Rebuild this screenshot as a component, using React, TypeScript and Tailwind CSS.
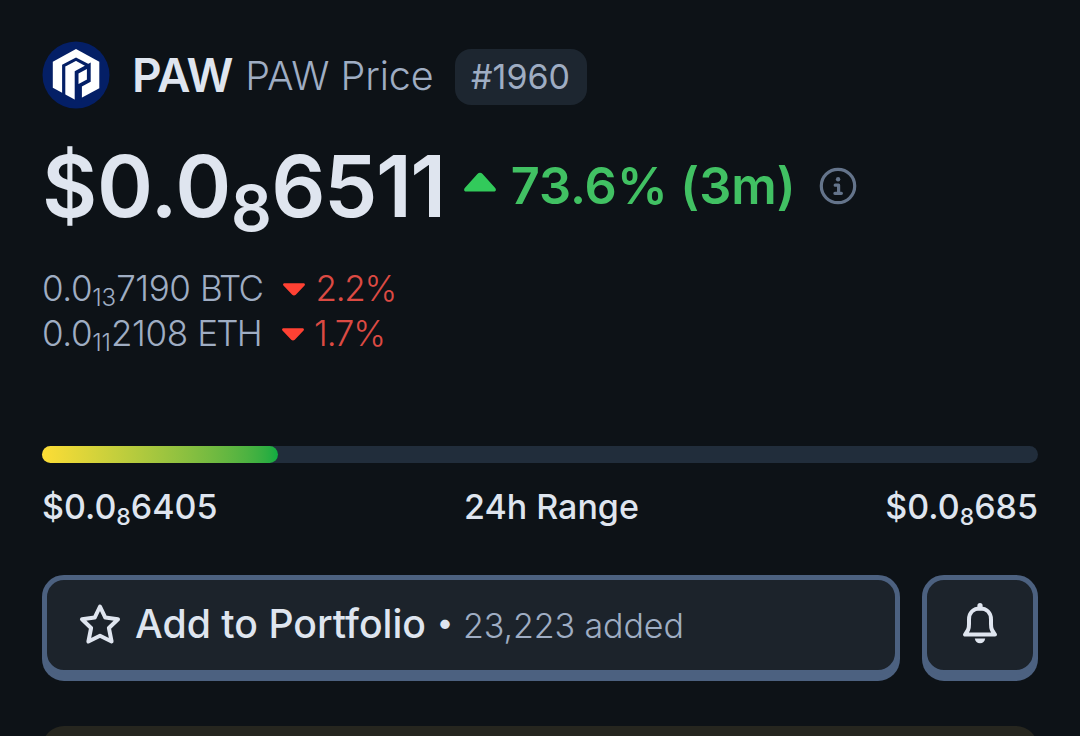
import React from 'react';

// ── Icons ───────────────────────────────────────────────────────────────────
const PawLogo: React.FC = () => (
  <svg viewBox="0 0 68 68" className="w-[68px] h-[68px] shrink-0">
    <circle cx="34" cy="34" r="33.5" fill="#041f66" />
    <path fill="#fff" d="M34 8 L57.3 20.7 V47.2 L34.5 59.6 L10.8 46.8 V20.7 Z" />
    <g fill="none" stroke="#041f66">
      <path strokeWidth="3.2" d="M21.7 55 V24.6 L34 18.2 L46.8 25" />
      <path strokeWidth="3.8" d="M34.6 61 V31.4 L46.8 24.8 V39.6 L38 44.4 V61" />
    </g>
    <path fill="#041f66" d="M33.5 46 H37.5 V61 H33.5 Z" />
  </svg>
);

const Caret: React.FC<{ className: string }> = ({ className }) => (
  <svg viewBox="0 0 32 20" preserveAspectRatio="none" className={className}>
    <path
      fill="currentColor"
      d="M2.2 19.6 H29.8 C32 19.6 32.6 17.2 31 15.7 L18.6 2 C17 0.3 15 0.3 13.4 2 L1 15.7 C-0.6 17.2 0 19.6 2.2 19.6 Z"
    />
  </svg>
);

const InfoIcon: React.FC = () => (
  <svg viewBox="0 0 38 38" className="w-[38px] h-[38px] shrink-0 text-[#64748b]" fill="none" stroke="currentColor">
    <circle cx="19" cy="19" r="16.7" strokeWidth="3.2" />
    <circle cx="19.1" cy="12.3" r="2.2" fill="currentColor" stroke="none" />
    <path d="M16.2 18.2 H19.6 V26 M15.9 26.3 H22.4" strokeWidth="3.2" strokeLinecap="round" strokeLinejoin="round" />
  </svg>
);

const StarIcon: React.FC = () => (
  <svg viewBox="0 0 42 42" className="w-[42px] h-[42px] shrink-0" fill="none" stroke="currentColor">
    <path
      d="M21 3.5 L26.3 14.6 L39 16.2 L29.9 25 L32.6 38.5 L21 32.7 L9.4 38.5 L12.1 25 L3 16.2 L15.7 14.6 Z"
      strokeWidth="4"
      strokeLinejoin="round"
    />
  </svg>
);

const BellIcon: React.FC = () => (
  <svg viewBox="0 0 36 42" className="w-[36px] h-[42px] shrink-0 text-[#dfe5ef]" fill="none" stroke="currentColor">
    <path
      d="M3 32.6 H33 C30 28.5 29 27 29 22 V17.5 C29 10.5 24.5 6.5 18 6.5 C11.5 6.5 7 10.5 7 17.5 V22 C7 27 6 28.5 3 32.6 Z"
      strokeWidth="4"
      strokeLinejoin="round"
    />
    <path d="M18 3.6 V6" strokeWidth="5.2" strokeLinecap="round" />
    <path d="M12.8 36.4 H23.2 C22.8 39.4 20.8 41.2 18 41.2 C15.2 41.2 13.2 39.4 12.8 36.4 Z" fill="currentColor" stroke="none" />
  </svg>
);

// ── Secondary price line ────────────────────────────────────────────────────
const PairRow: React.FC<{ zeros: string; digits: string; unit: string; change: string }> = ({
  zeros,
  digits,
  unit,
  change,
}) => (
  <div className="flex items-center h-[45px] text-[35px] leading-[45px] font-light text-[#9fadc3] whitespace-nowrap">
    <span className="tracking-[-0.4px]">
      0.0<sub className="text-[24px] tracking-normal bottom-[-5px]">{zeros}</sub>
      {digits} <span className="tracking-[-1.7px]">{unit}</span>
    </span>
    <Caret className="w-[22px] h-[13px] mt-px ml-[21px] mr-[10px] rotate-180 text-[#ff4133]" />
    <span className="tracking-[-1.2px] text-[#dc4a43]">{change}</span>
  </div>
);

// ── Page ────────────────────────────────────────────────────────────────────
export default function App() {
  return (
    <div className="w-[1080px] h-[736px] overflow-hidden bg-[#0d1217] px-[42px] pt-[41px] font-['Inter',sans-serif] text-[#dfe5ef]">
      {/* Coin name and rank */}
      <div className="flex items-center h-[68px] whitespace-nowrap">
        <PawLogo />
        <span className="ml-[22px] text-[46px] font-semibold tracking-[-1px]">PAW</span>
        <span className="ml-[13px] pt-[3px] text-[39.5px] font-light tracking-[-0.1px] text-[#9fadc3]">PAW Price</span>
        <span className="ml-[21px] mt-[4px] pb-[2px] flex items-center justify-center w-[132px] h-[56px] rounded-[16px] bg-[#1d2630] text-[34px] text-[#9fadc3]">
          #1960
        </span>
      </div>

      {/* Price */}
      <div className="flex items-center h-[100px] mt-[28px] whitespace-nowrap">
        <span className="text-[85px] leading-[100px] font-semibold">
          <span className="tracking-[-0.2px]">$0.0</span>
          <sub className="bottom-[-14px] tracking-[-0.5px]">8</sub>
          <span className="tracking-[-1.6px]">6511</span>
        </span>
        <Caret className="w-[32px] h-[20px] ml-[19px] -mt-[10px] text-[#32ca5b]" />
        <span className="ml-[15px] -mt-[2px] text-[50.5px] font-semibold text-[#41c163]">73.6% (3m)</span>
        <span className="ml-[23px] -mt-[2px]">
          <InfoIcon />
        </span>
      </div>

      <div className="mt-[29px]">
        <PairRow zeros="13" digits="7190" unit="BTC" change="2.2%" />
        <PairRow zeros="11" digits="2108" unit="ETH" change="1.7%" />
      </div>

      {/* 24h range */}
      <div className="mt-[90px] h-[17px] rounded-full bg-[#212d3b]">
        <div className="w-[236px] h-full rounded-full bg-linear-to-r from-[#fddd35] to-[#0cab41]" />
      </div>
      <div className="flex justify-between mt-[22px] text-[34px] leading-[44px] font-medium whitespace-nowrap">
        <span>
          $0.0<sub className="text-[23px] bottom-[-6px]">8</sub>6405
        </span>
        <span>24h Range</span>
        <span>
          $0.0<sub className="text-[23px] bottom-[-6px]">8</sub>685
        </span>
      </div>

      {/* Actions */}
      <div className="flex gap-[22px] mt-[46px]">
        <button className="flex items-center w-[858px] h-[100px] pl-[32px] pb-[2px] rounded-[22px] border-[5px] border-[#4c6180] bg-[#1c232b] shadow-[0_6px_0_0_#4c6180] whitespace-nowrap">
          <StarIcon />
          <span className="ml-[14px] text-[39.2px] font-medium">Add to Portfolio</span>
          <span className="ml-[11px] -mt-[3px] text-[30px] font-medium">•</span>
          <span className="ml-[10px] mt-[3px] text-[34px] font-light tracking-[-0.1px] text-[#9fadc3]">23,223 added</span>
        </button>
        <button className="flex items-center justify-center w-[116px] h-[100px] pb-[4px] rounded-[22px] border-[5px] border-[#4c6180] bg-[#1c232b] shadow-[0_6px_0_0_#4c6180]">
          <BellIcon />
        </button>
      </div>

      {/* Top edge of the notice card */}
      <div className="mt-[51px] h-[60px] rounded-[22px] bg-[#26261f]" />
    </div>
  );
}
